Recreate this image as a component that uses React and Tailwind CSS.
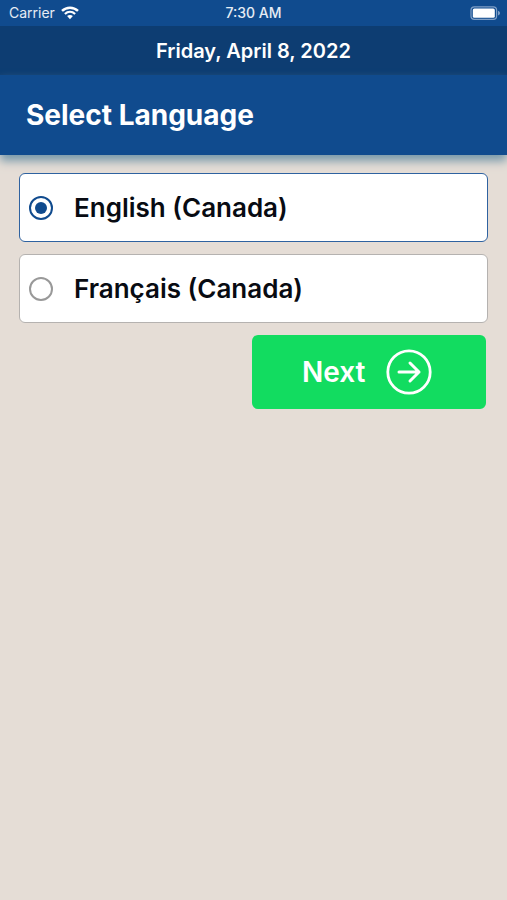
import { useState } from 'react';

const LANGUAGES = [
  { id: 'en-CA', label: 'English (Canada)' },
  { id: 'fr-CA', label: 'Français (Canada)' },
];

function WifiIcon() {
  return (
    <svg viewBox="0 0 18 14" className="h-3.5 w-[18px]" fill="none" aria-hidden="true">
      <path d="M1 4.9C5.6 .6 12.4 .6 17 4.9" stroke="white" strokeWidth="2.5" />
      <path d="M3.9 8C6.9 5.2 11.1 5.2 14.1 8" stroke="white" strokeWidth="2.2" />
      <path d="M6.1 10.1C7.8 8.6 10.2 8.6 11.9 10.1L9 13.2Z" fill="white" />
    </svg>
  );
}

function BatteryIcon() {
  return (
    <svg viewBox="0 0 31 14" className="h-3.5 w-[31px]" fill="none" aria-hidden="true">
      <rect x="1" y=".8" width="25.6" height="12.6" rx="3.4" stroke="#7f9fc6" strokeWidth="1.2" />
      <rect x="2.8" y="2.4" width="22" height="9.4" rx="1.6" fill="white" />
      <path d="M28 4.7C30.7 5.6 30.7 8.6 28 9.5Z" fill="#7f9fc6" />
    </svg>
  );
}

function StatusBar() {
  return (
    <div className="grid h-[26px] grid-cols-3 items-center bg-[#104b8e] px-1.5 font-['Inter','Liberation_Sans',sans-serif] text-sm text-white/90">
      <div className="flex items-center gap-1.5 pl-[3px]">
        <span>Carrier</span>
        <WifiIcon />
      </div>
      <span className="text-center font-medium">7:30 AM</span>
      <div className="flex justify-end">
        <BatteryIcon />
      </div>
    </div>
  );
}

function LanguageOption({ id, label, checked, onSelect }) {
  return (
    <label
      htmlFor={id}
      className={`flex h-[69px] items-center gap-5 rounded-md border bg-white pl-2 text-[26px] font-semibold text-[#080b12] ${
        checked ? 'border-[#2f62a0]' : 'border-[#b5b2b0]'
      }`}
    >
      <input
        id={id}
        type="radio"
        name="language"
        checked={checked}
        onChange={onSelect}
        className="mx-px size-6 shrink-0 appearance-none rounded-full border-2 border-[#999999] bg-white bg-clip-content p-1 checked:border-[#104b8e] checked:bg-[#104b8e]"
      />
      <span>{label}</span>
    </label>
  );
}

export default function App() {
  const [language, setLanguage] = useState('en-CA');

  return (
    <div className="flex min-h-screen flex-col bg-[#e5ddd6] font-['Inter','Liberation_Sans',sans-serif]">
      <StatusBar />
      <div className="flex h-[49px] items-center justify-center bg-[#0d3d72] text-xl font-semibold text-white">
        Friday, April 8, 2022
      </div>
      <header className="flex h-20 items-center bg-[#104b8e] px-[26px] shadow-[0_6px_9px_0px_#7899aa]">
        <h1 className="text-[28px] font-bold text-white">Select Language</h1>
      </header>
      <main className="flex flex-col gap-3 px-[19px] pt-[18px]">
        <div role="radiogroup" aria-label="Select Language" className="flex flex-col gap-3">
          {LANGUAGES.map((item) => (
            <LanguageOption
              key={item.id}
              id={item.id}
              label={item.label}
              checked={language === item.id}
              onSelect={() => setLanguage(item.id)}
            />
          ))}
        </div>
        <button
          type="button"
          className="mr-0.5 flex h-[74px] w-1/2 items-center justify-center gap-5 self-end rounded-md bg-[#12dc60] pr-1 text-[28px] font-semibold text-white"
        >
          <span>Next</span>
          <svg viewBox="0 0 46 46" className="size-[46px]" fill="none" stroke="white" strokeLinecap="round" strokeLinejoin="round" aria-hidden="true">
            <circle cx="23" cy="23" r="21.2" strokeWidth="2.8" />
            <path d="M13 23H33M24 14L33 23L24 32" strokeWidth="3" />
          </svg>
        </button>
      </main>
    </div>
  );
}
